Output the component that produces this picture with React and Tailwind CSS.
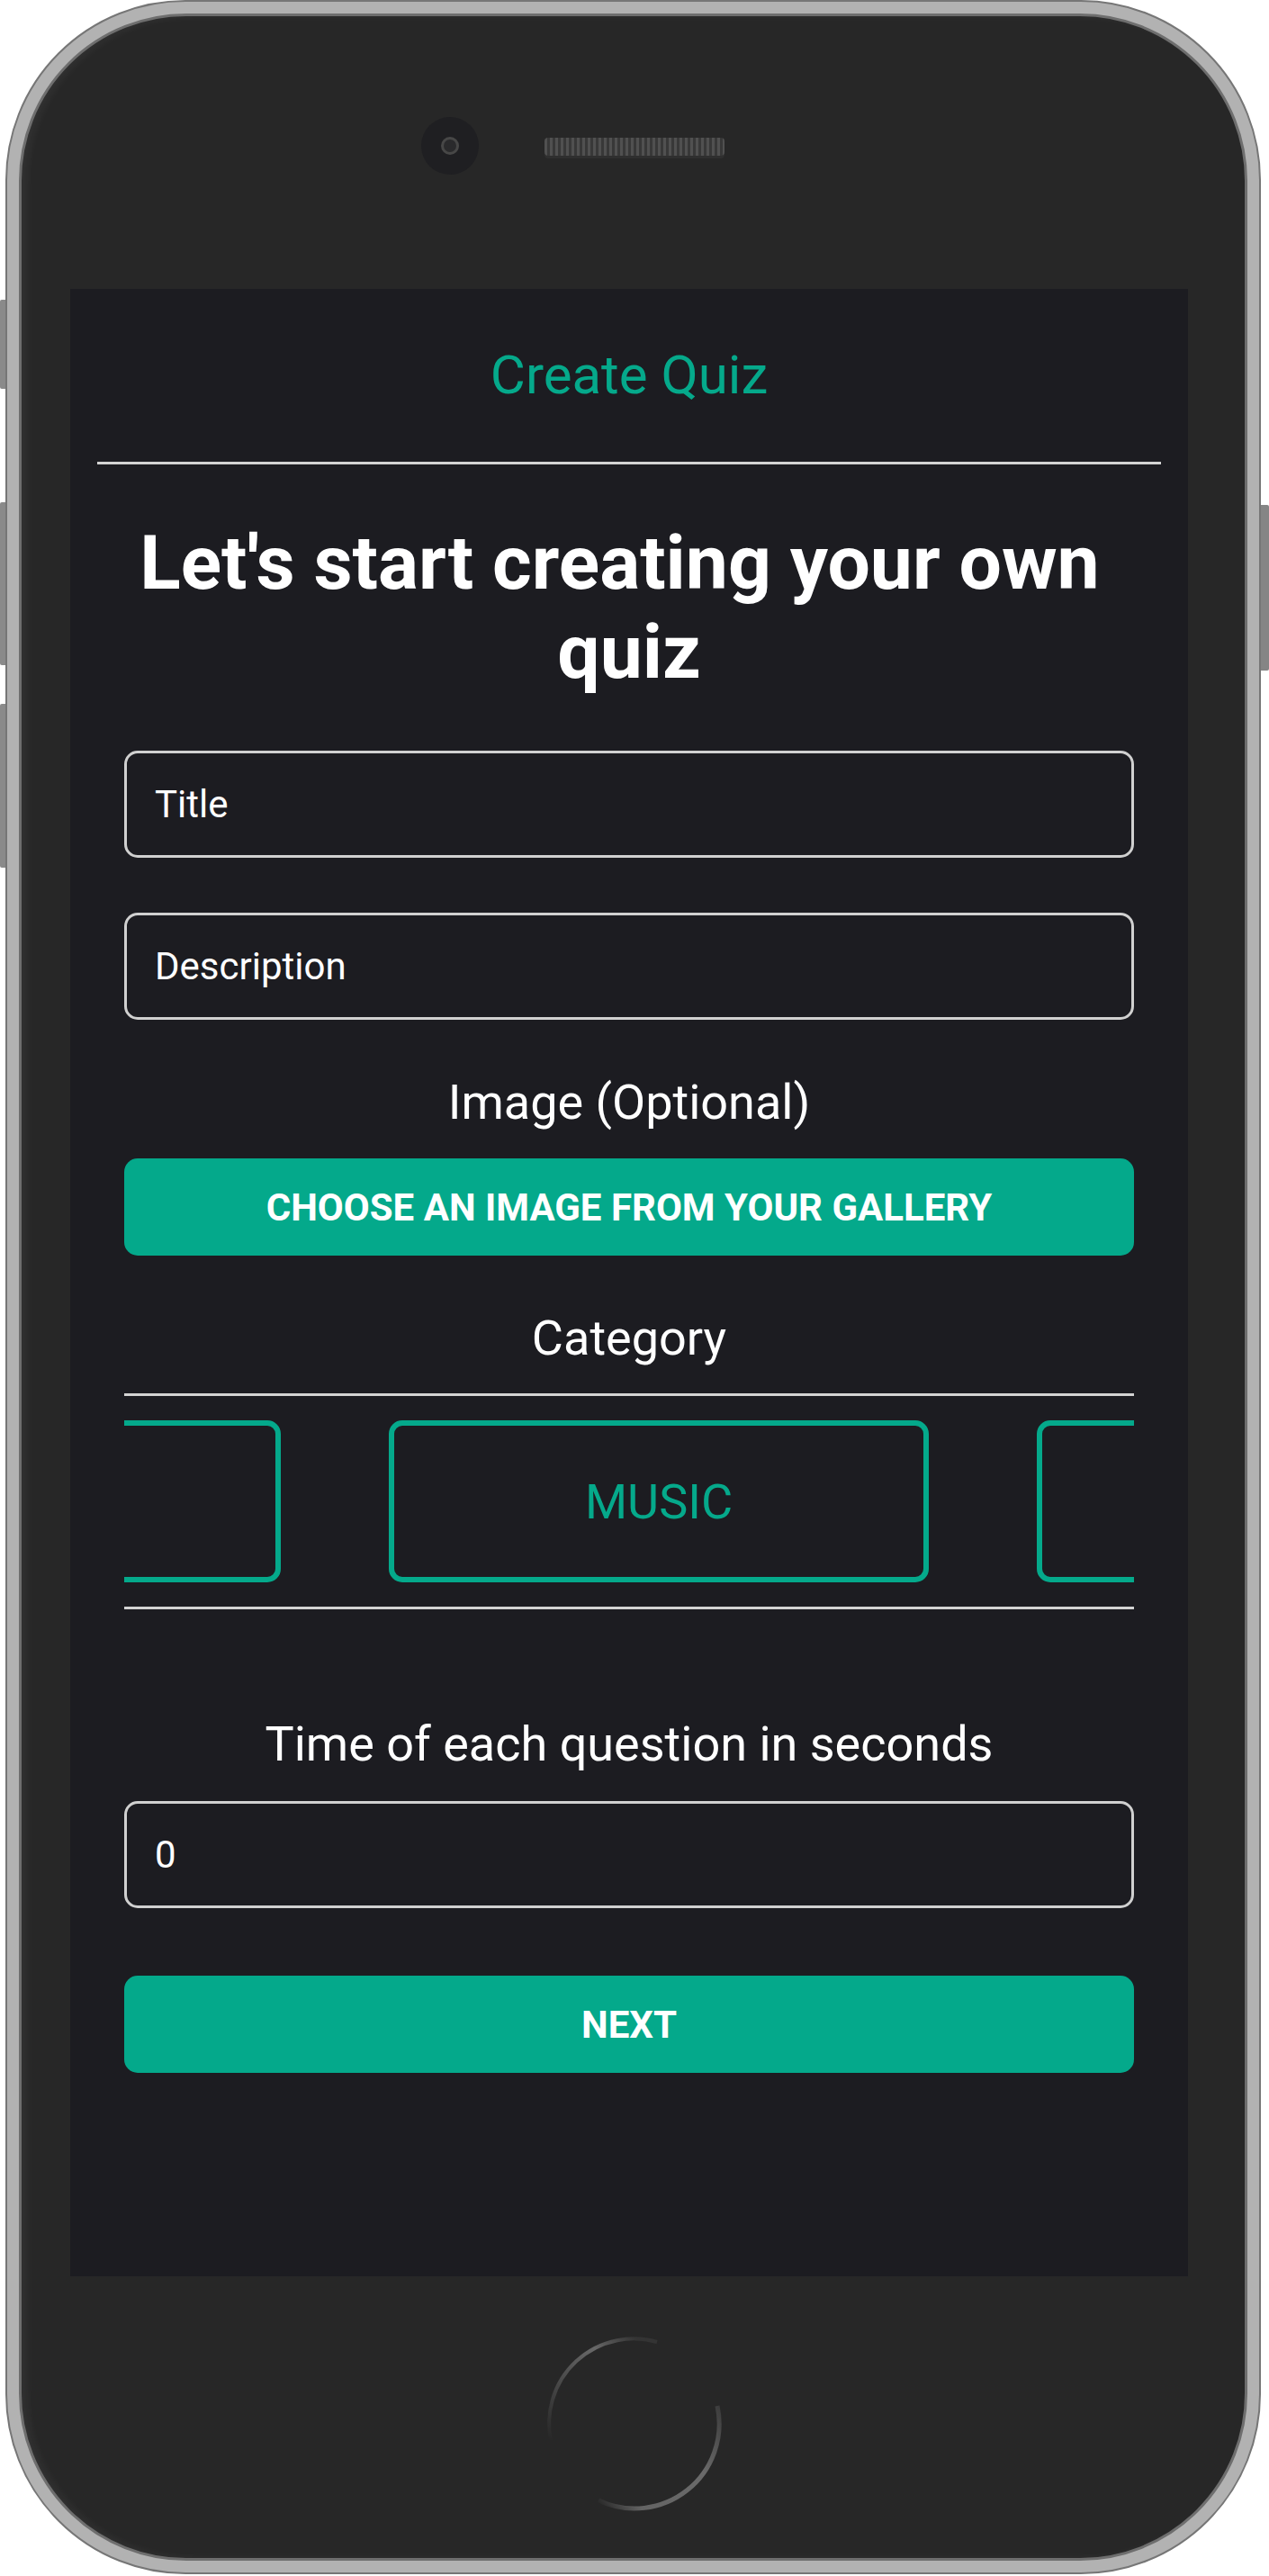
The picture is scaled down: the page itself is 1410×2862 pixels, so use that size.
import React from 'react'

const green = 'text-[#05a98b]'

function Field({ value }) {
  return (
    <div className="h-[119px] border-[3px] border-[#d0d0d0] rounded-[15px] pl-[31px] pr-[32px] flex items-center text-[42px] text-white">
      {value}
    </div>
  )
}

function Label({ children, className = '' }) {
  return <p className={`text-[54px] leading-[63px] text-center text-white ${className}`}>{children}</p>
}

function HomeButton() {
  return (
    <svg width="200" height="200" viewBox="0 0 200 200">
      <defs>
        <linearGradient id="ha" x1="100" y1="4" x2="8" y2="120" gradientUnits="userSpaceOnUse">
          <stop offset="0" stopColor="#686868" stopOpacity="0.2" />
          <stop offset="0.25" stopColor="#686868" stopOpacity="1" />
          <stop offset="1" stopColor="#686868" stopOpacity="0" />
        </linearGradient>
        <linearGradient id="hb" x1="196" y1="80" x2="60" y2="190" gradientUnits="userSpaceOnUse">
          <stop offset="0" stopColor="#6a6a6a" stopOpacity="0.3" />
          <stop offset="0.35" stopColor="#6a6a6a" stopOpacity="1" />
          <stop offset="0.8" stopColor="#6a6a6a" stopOpacity="0.9" />
          <stop offset="1" stopColor="#6a6a6a" stopOpacity="0" />
        </linearGradient>
      </defs>
      <path d="M 125 9 A 94 94 0 0 0 7 118" fill="none" stroke="url(#ha)" strokeWidth="4" />
      <path d="M 192 80 A 94 94 0 0 1 60 185" fill="none" stroke="url(#hb)" strokeWidth="5" />
    </svg>
  )
}

export default function App() {
  return (
    <div className="relative w-[1410px] h-[2862px] bg-white font-[Roboto,sans-serif]">
      {/* side buttons */}
      <div className="absolute left-0 top-[333px] w-[10px] h-[99px] bg-[#8a8a8a] rounded-l-[2px]" />
      <div className="absolute left-0 top-[558px] w-[10px] h-[181px] bg-[#8a8a8a] rounded-l-[2px]" />
      <div className="absolute left-0 top-[782px] w-[10px] h-[182px] bg-[#8a8a8a] rounded-l-[2px]" />
      <div className="absolute right-0 top-[561px] w-[12px] h-[184px] bg-[#858585] rounded-r-[2px]" />

      <div className="relative ml-[6px] w-[1395px] h-[2860px] rounded-[200px] bg-[#b2b2b2] border-[2px] border-[#767676] p-[13px]">
        <div className="h-full rounded-[186px] bg-[#272727] border-[3px] border-[#6e6e6e] flex flex-col shadow-[inset_6px_0_10px_rgba(255,255,255,0.05)]">
          {/* top bezel */}
          <div className="h-[303px] shrink-0 pt-[112px] pl-[444px] flex items-start">
            <div className="w-[64px] h-[64px] rounded-full bg-[#1f1f22] flex items-center justify-center">
              <div className="w-[20px] h-[20px] rounded-full border-[3px] border-[#474747] bg-[#2a2a2c]" />
            </div>
            <div className="ml-[73px] mt-[23px] w-[200px] h-[20px] rounded-[4px] bg-[repeating-linear-gradient(90deg,#505050_0_3px,#383838_3px_6px)] shadow-[0_3px_0_#2f2f2f]" />
          </div>

          {/* screen */}
          <div className="ml-[54px] w-[1242px] h-[2208px] shrink-0 bg-[#1c1c21] flex flex-col">
            <div className="h-[192px] flex items-center justify-center">
              <h1 className={`text-[60px] ${green}`}>Create Quiz</h1>
            </div>
            <div className="mx-[30px] h-[3px] bg-[#d3d3d3]" />

            <div className="px-[60px] flex flex-col">
              <h2 className="mt-[60px] text-[84px] leading-[99px] font-bold text-center text-white">
                <span className="block pr-[21px]">Let's start creating your own</span>
                <span className="block">quiz</span>
              </h2>

              <div className="mt-[60px]"><Field value="Title" /></div>
              <div className="mt-[61px]"><Field value="Description" /></div>

              <Label className="mt-[60px]">Image (Optional)</Label>
              <button className="mt-[31px] h-[108px] rounded-[15px] bg-[#04a98b] text-white font-bold text-[42px] flex items-center justify-center">
                CHOOSE AN IMAGE FROM YOUR GALLERY
              </button>

              <Label className="mt-[60px]">Category</Label>
              <div className="mt-[30px] border-y-[3px] border-[#d3d3d3] py-[27px] overflow-hidden">
                <div className="flex gap-[120px] ml-[-426px]">
                  {['', 'MUSIC', ''].map((c, i) => (
                    <div key={i} className={`w-[600px] h-[180px] shrink-0 border-[6px] border-[#04a98b] rounded-[15px] flex items-center justify-center text-[54px] ${green}`}>
                      {c}
                    </div>
                  ))}
                </div>
              </div>

              <Label className="mt-[118px]">Time of each question in seconds</Label>
              <div className="mt-[32px]"><Field value="0" /></div>

              <button className="mt-[75px] h-[108px] rounded-[15px] bg-[#04a98b] text-white font-bold text-[42px] flex items-center justify-center">
                NEXT
              </button>
            </div>
          </div>

          {/* bottom bezel */}
          <div className="flex-1 flex justify-center pt-[64px] pl-[3px]">
            <HomeButton />
          </div>
        </div>
      </div>
    </div>
  )
}
